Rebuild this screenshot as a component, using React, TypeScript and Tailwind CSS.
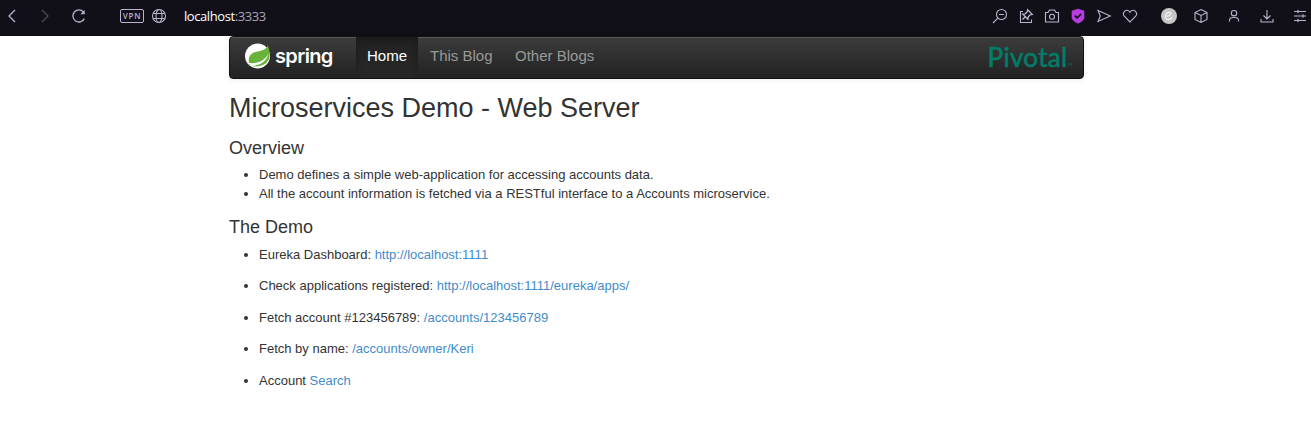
import React from "react";

type IconProps = { className?: string; children: React.ReactNode };

function Icon({ className = "", children }: IconProps) {
  return (
    <svg
      viewBox="0 0 16 16"
      className={`size-4 shrink-0 ${className}`}
      fill="none"
      stroke="currentColor"
      strokeWidth="1.1"
    >
      {children}
    </svg>
  );
}

function BrowserBar() {
  return (
    <header className="flex h-9 items-center bg-[#111018] pb-1 text-[#b9b3d0]">
      <Icon className="ml-1"><path d="M11 2 5 8l6 6" strokeWidth="1.3" /></Icon>
      <Icon className="ml-[17px] text-[#4b4858]"><path d="m5 2 6 6-6 6" strokeWidth="1.3" /></Icon>
      <Icon className="ml-[18px]">
        <path d="M13.3 10.6A6 6 0 1 1 12.4 4" strokeWidth="1.3" />
        <path d="M13.7 2v4.3H9.4z" fill="currentColor" stroke="none" />
      </Icon>
      <div className="ml-[33px] flex h-[14px] w-6 items-center justify-center rounded-[2px] border border-[#b9b3d0] font-['Open_Sans',sans-serif] text-[8px] leading-none font-semibold tracking-[0.8px]">
        VPN
      </div>
      <Icon className="ml-[7px]">
        <circle cx="8" cy="8" r="6.5" />
        <ellipse cx="8" cy="8" rx="3" ry="6.5" />
        <path d="M2.3 5.5h11.4M2.3 10.5h11.4" />
      </Icon>
      <div className="ml-[17px] font-['Open_Sans',sans-serif] text-[13px] leading-none tracking-[-0.42px] text-white">
        localhost<span className="text-[#aaa4bd]">:3333</span>
      </div>
      <div className="ml-auto flex items-center">
        <div className="flex gap-[10px]">
          <Icon>
            <circle cx="9.5" cy="6.5" r="5" />
            <path d="M5.8 10.2 1 15M7 6.5h5" />
          </Icon>
          <Icon>
            <path d="M5 3.5H2.5v11h11v-3" />
            <path d="m9.6 1.8 4.6 4.6-2 .4-2 2-.3 2.5-5.2-5.2 2.5-.3 2-2zM7.2 8.8 4.5 11.5" strokeWidth="1.3" />
          </Icon>
          <Icon>
            <path d="M1.5 4.5H4L5.500 2h5L12 4.5h2.5V14h-13z" />
            <circle cx="8" cy="8.7" r="2.5" />
          </Icon>
          <Icon>
            <path d="M8 1 14 3v6.5c0 2.5-3 4.5-6 5.7-3-1.2-6-3.2-6-5.700V3z" fill="#b83ce0" stroke="#b83ce0" strokeWidth="0.6" />
            <path d="m4.8 7.6 2.3 2.3 4.2-4" stroke="#111018" strokeWidth="1.7" />
          </Icon>
          <Icon><path d="M2 2.5 14.3 8 2 13.5 4.3 8z" /></Icon>
          <Icon><path d="M8 14 2.3 8.2C-.5 4.8 4.6-.7 8 4.2c3.4-4.9 8.5.6 5.7 4z" /></Icon>
        </div>
        <svg viewBox="0 0 16 16" className="ml-[23px] size-4" fill="none">
          <circle cx="8" cy="8" r="8" fill="#c6c6c6" />
          <path d="M5.500 8.200c4 .3 5.500-3.500 3-3.800-3-.3-5 3-3.800 5.600 1.300 2.600 4.800 2 6.300-.6" stroke="#f4f4f4" strokeWidth="1.2" />
        </svg>
        <Icon className="ml-[15.5px]">
          <path d="m8 1.5 6 3v7l-6 3-6-3v-7zM2 4.5l6 3 6-3M8 7.500v7" />
        </Icon>
        <Icon className="ml-[17.5px]">
          <circle cx="8" cy="5.2" r="2.7" />
          <path d="M3.5 13.5V12c0-3.4 9-3.4 9 0v1.5" />
        </Icon>
        <Icon className="ml-[16.5px]">
          <path d="M8 2v9M4.5 7.5 8 11l3.5-3.5M2 11v3h12v-3" />
        </Icon>
        <Icon className="mr-[3px] ml-[17.5px]">
          <path d="M2 3.5h12M2 8h12M2 12.5h12M6 1.8v3.4M11 6.3v3.4M6 10.8v3.4" />
        </Icon>
      </div>
    </header>
  );
}

function Navbar() {
  return (
    <nav className="flex h-[43px] rounded-[4px] border border-[#111] bg-linear-to-b from-[#3c3c3c] to-[#222] font-['Liberation_Sans',Arial,sans-serif] text-[15px] text-[#999] shadow-[inset_0_1px_0_rgba(255,255,255,0.15),0_1px_5px_rgba(0,0,0,0.075)]">
      <a className="flex w-[126px] items-start pt-[6px] pl-[15px]" href="#">
        <svg viewBox="0 0 26 26" className="h-[26px] w-[26px]">
          <circle cx="12.5" cy="13" r="12.5" fill="#fff" />
          <path d="M22.800 2.500C20.500 7 17 7.600 12.500 8.500 5.500 10 3 13.500 4 20c8 .8 15-1.500 19.400-9-2.400 8.200-9.400 12.200-17.400 11.700 8 2.300 17-.7 18.400-8.700.8-4.500-.4-8-1.600-11.500z" fill="#68b33b" />
          <circle cx="4.2" cy="22" r=".8" fill="#68b33b" />
        </svg>
        <span className="ml-1 font-['Inter',sans-serif] text-[20px] leading-[26px] font-semibold tracking-[-0.65px] text-white">spring</span>
      </a>
      <a className="flex w-[62px] items-center justify-center bg-linear-to-b from-[#222] to-[#282828] pb-1 text-white shadow-[inset_0_3px_9px_rgba(0,0,0,0.25)]" href="#">Home</a>
      <a className="ml-[12px] flex items-center pb-1" href="#">This Blog</a>
      <a className="ml-[22.5px] flex items-center pb-1" href="#">Other Blogs</a>
      <div className="mr-[11px] ml-auto flex items-start font-['Lato',sans-serif] text-[26px] leading-[41px] tracking-[0.3px] text-[#007d69] [-webkit-text-stroke:0.6px_#007d69]">
        Pivotal<span className="mt-[27px] text-[3px] leading-none tracking-normal [-webkit-text-stroke:0]">TM</span>
      </div>
    </nav>
  );
}

const demoItems = [
  { label: "Eureka Dashboard:", link: "http://localhost:1111" },
  { label: "Check applications registered:", link: "http://localhost:1111/eureka/apps/" },
  { label: "Fetch account #123456789:", link: "/accounts/123456789" },
  { label: "Fetch by name:", link: "/accounts/owner/Keri" },
  { label: "Account", link: "Search" },
];

export default function App() {
  return (
    <div className="h-[426px] overflow-hidden bg-white">
      <BrowserBar />
      <main className="ml-[229px] w-[855px] font-['Liberation_Sans',Arial,sans-serif] text-[13px] leading-[19px] text-[#333]">
        <Navbar />
        <h1 className="mt-[14px] text-[27px] leading-[30px]">Microservices Demo - Web Server</h1>
        <h2 className="mt-[15px] text-[18px] leading-[20px]">Overview</h2>
        <ul className="mt-[7px] list-disc pl-[30px]">
          <li>Demo defines a simple web-application for accessing accounts data.</li>
          <li>All the account information is fetched via a RESTful interface to a Accounts microservice.</li>
        </ul>
        <h2 className="mt-[14px] text-[18px] leading-[20px]">The Demo</h2>
        <ul className="mt-[8px] flex list-disc flex-col gap-[12.4px] pl-[30px]">
          {demoItems.map((item) => (
            <li key={item.label}>
              {item.label} <a href="#" className="text-[#428bca]">{item.link}</a>
            </li>
          ))}
        </ul>
      </main>
    </div>
  );
}
